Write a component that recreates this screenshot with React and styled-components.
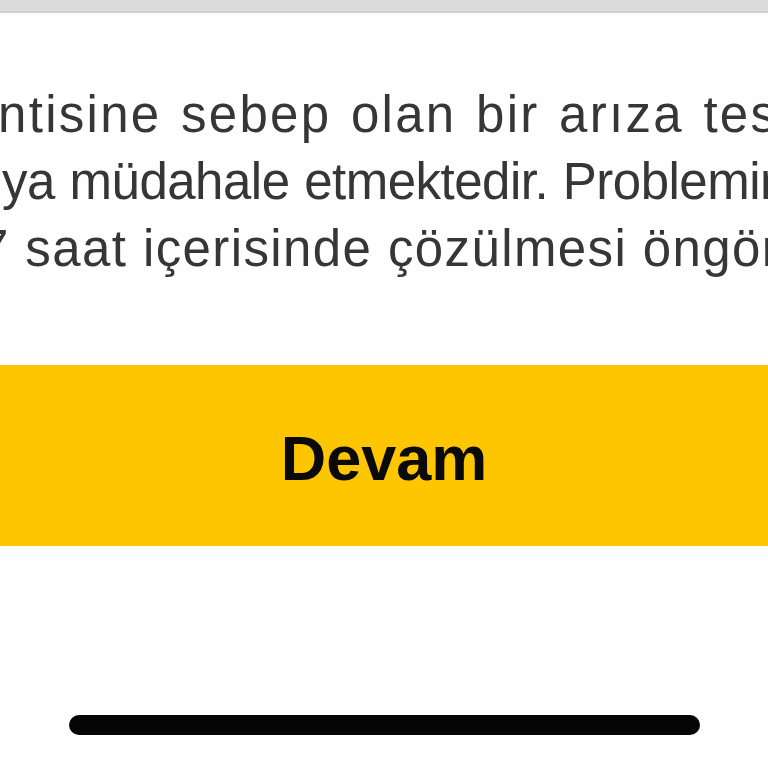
import React from 'react';
import styled, { createGlobalStyle } from 'styled-components';

const GlobalStyle = createGlobalStyle`
  html, body {
    margin: 0;
    padding: 0;
    background: #fefefe;
  }
  body {
    font-family: "Liberation Sans", Arial, sans-serif;
  }
`;

const Screen = styled.div`
  width: 768px;
  height: 768px;
  display: flex;
  flex-direction: column;
  overflow: hidden;
  background: #fefefe;
`;

const TopBar = styled.div`
  height: 11px;
  background: #dbdbdb;
  border-bottom: 2px solid #cfcfcf;
  flex-shrink: 0;
`;

const Message = styled.div`
  padding-top: 68px;
  overflow: hidden;
  color: #363636;
  font-size: 51px;
  line-height: 67px;
`;

const Line = styled.div`
  white-space: nowrap;
  text-indent: ${(p) => p.$indent || 0}px;
  letter-spacing: ${(p) => p.$spacing || 0}px;
  word-spacing: ${(p) => p.$words || 0}px;
`;

const ContinueButton = styled.button`
  margin-top: 83px;
  height: 181px;
  width: 100%;
  border: none;
  background: #fdc600;
  color: #0a0a0a;
  font-family: "Liberation Sans", Arial, sans-serif;
  font-weight: 700;
  font-size: 63px;
  display: flex;
  align-items: center;
  justify-content: center;
  padding: 4px 0 0;
  flex-shrink: 0;
`;

const HomeArea = styled.div`
  flex: 1;
  display: flex;
  justify-content: center;
  padding-top: 169px;
`;

const HomeIndicator = styled.div`
  width: 631px;
  height: 20px;
  border-radius: 10px;
  background: #050505;
`;

const lines = [
  { text: 'ntisine sebep olan bir arıza tespit edilmiştir.', indent: -2, spacing: 2.3, words: 3 },
  { text: 'ya müdahale etmektedir. Problemin', indent: 2, spacing: -0.5, words: 1 },
  { text: '7 saat içerisinde çözülmesi öngörülmektedir.', indent: -20, spacing: 1.4 },
];

export default function App() {
  return (
    <>
      <GlobalStyle />
      <Screen>
        <TopBar />
        <Message>
          {lines.map((l) => (
            <Line key={l.text} $indent={l.indent} $spacing={l.spacing} $words={l.words}>
              {l.text}
            </Line>
          ))}
        </Message>
        <ContinueButton>Devam</ContinueButton>
        <HomeArea>
          <HomeIndicator />
        </HomeArea>
      </Screen>
    </>
  );
}
